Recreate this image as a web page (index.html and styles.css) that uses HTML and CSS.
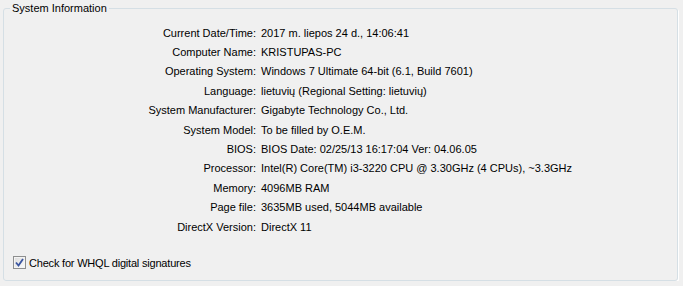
FILE: index.html
```html
<!DOCTYPE html>
<html lang="en">
<head>
    <meta charset="UTF-8">
    <title>System Information</title>
    <link rel="stylesheet" href="styles.css">
</head>
<body>

<fieldset class="group">
    <legend>System Information</legend>

    <div class="info">
        <span class="key">Current Date/Time:</span>
        <span class="val">2017 m. liepos 24 d., 14:06:41</span>

        <span class="key">Computer Name:</span>
        <span class="val">KRISTUPAS-PC</span>

        <span class="key">Operating System:</span>
        <span class="val">Windows 7 Ultimate 64-bit (6.1, Build 7601)</span>

        <span class="key">Language:</span>
        <span class="val">lietuvių (Regional Setting: lietuvių)</span>

        <span class="key">System Manufacturer:</span>
        <span class="val">Gigabyte Technology Co., Ltd.</span>

        <span class="key">System Model:</span>
        <span class="val">To be filled by O.E.M.</span>

        <span class="key">BIOS:</span>
        <span class="val">BIOS Date: 02/25/13 16:17:04 Ver: 04.06.05</span>

        <span class="key">Processor:</span>
        <span class="val">Intel(R) Core(TM) i3-3220 CPU @ 3.30GHz (4 CPUs), ~3.3GHz</span>

        <span class="key">Memory:</span>
        <span class="val">4096MB RAM</span>

        <span class="key">Page file:</span>
        <span class="val">3635MB used, 5044MB available</span>

        <span class="key">DirectX Version:</span>
        <span class="val">DirectX 11</span>
    </div>

    <!-- WHQL option -->
    <label class="check">
        <span class="box">
            <svg width="9" height="9" viewBox="0 0 9 9">
                <path d="M1 4.5 L3.5 7.5 L8 1" fill="none" stroke="#3a55a0" stroke-width="1.8"/>
            </svg>
        </span>
        Check for WHQL digital signatures
    </label>
</fieldset>

</body>
</html>
```

FILE: styles.css
```css
body {
    margin: 0;
    background-color: #f0f0f0;
    font-family: "Liberation Sans", Arial, sans-serif;
    font-size: 11px;
    color: #000;
}

.group {
    margin: 0 5px 0 3px;
    padding: 7px 6px 0 6px;
    height: 272px;
    border: 1px solid #d5dfe5;
    border-radius: 3px;
    box-shadow: 1px 1px 0 #fff;
}

.group legend {
    padding: 0 2px;
    line-height: 16px;
}

.info {
    display: grid;
    grid-template-columns: 246px 1fr;
    column-gap: 5px;
    grid-auto-rows: 19.4px;
    align-items: center;
}

.key {
    text-align: right;
}

.check {
    display: flex;
    align-items: center;
    gap: 3px;
    margin-top: 20px;
    margin-left: 3px;
    letter-spacing: -0.2px;
}

.box {
    display: flex;
    align-items: center;
    justify-content: center;
    width: 11px;
    height: 11px;
    border: 1px solid #8e8f8f;
    background: linear-gradient(135deg, #dcdcdc, #fbfbfb);
    box-shadow: inset 0 0 0 1px #f4f4f4;
}
```
